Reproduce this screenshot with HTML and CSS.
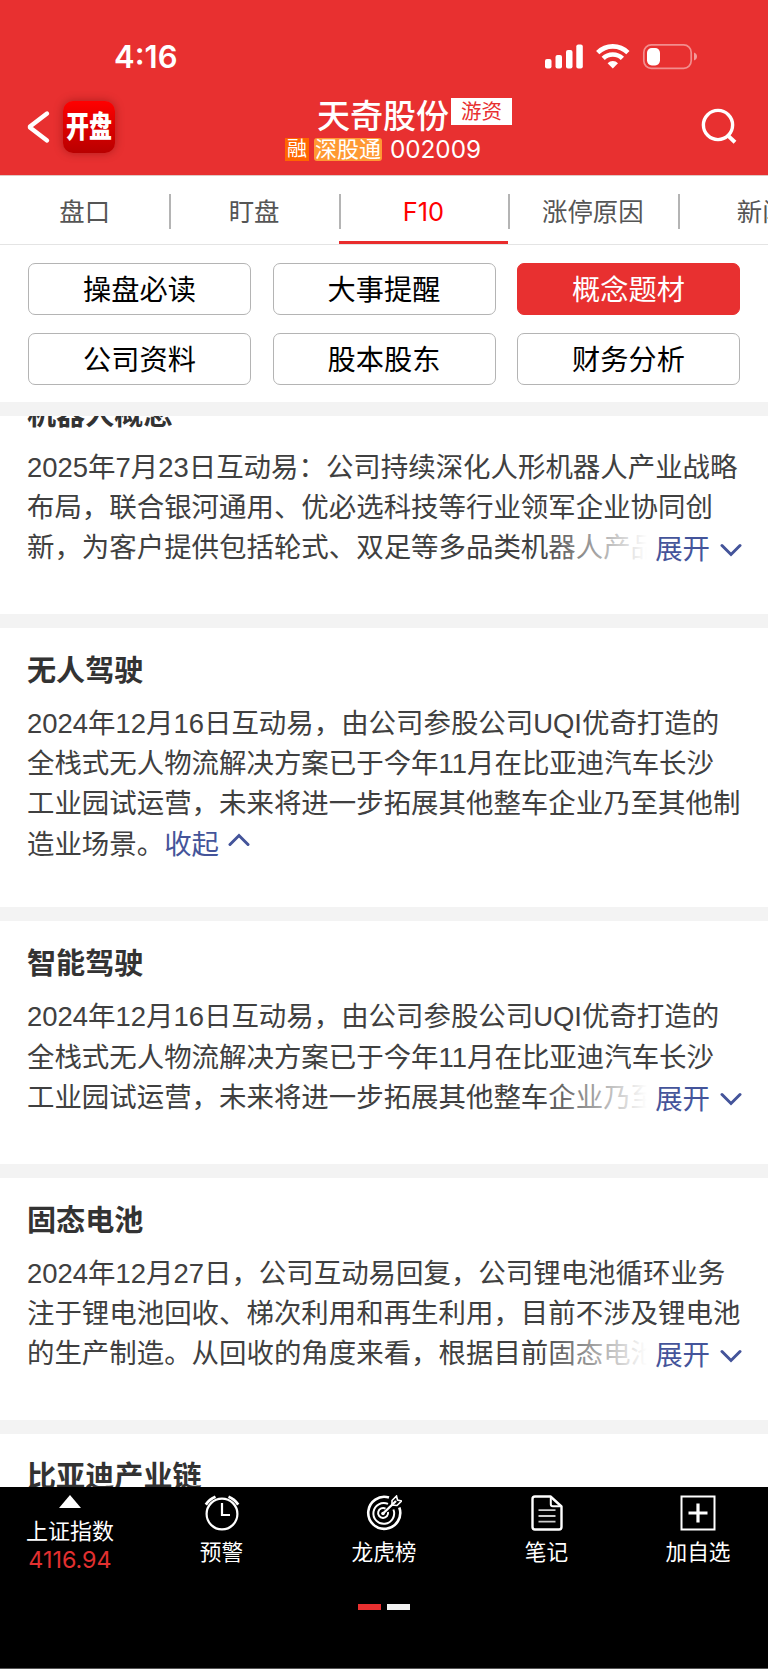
FILE: index.html
```html
<!DOCTYPE html>
<html lang="zh-CN">
<head>
    <meta charset="UTF-8">
    <meta name="viewport" content="width=device-width, initial-scale=1.0">
    <title>天奇股份 002009</title>
    <link rel="stylesheet" href="styles.css">
</head>
<body>
    <header class="header">
        <div class="status-bar">
            <span class="time">4:16</span>
            <svg class="status-icons" width="154" height="26" viewBox="0 0 154 26">
                <g fill="#fff">
                    <rect x="1" y="15" width="6.5" height="9.5" rx="2"/>
                    <rect x="11.5" y="11" width="6.5" height="13.5" rx="2"/>
                    <rect x="22" y="6" width="6.5" height="18.5" rx="2"/>
                    <rect x="32.3" y="0.5" width="6.5" height="24" rx="2"/>
                </g>
                <g fill="none" stroke="#fff" stroke-width="4.6">
                    <path d="M53.7 8.6a21.4 21.4 0 0 1 30.2 0"/>
                    <path d="M59.2 14.4a13.6 13.6 0 0 1 19.2 0"/>
                </g>
                <path d="M68.8 24.4l-5.2-5.2a7.4 7.4 0 0 1 10.4 0z" fill="#fff"/>
                <rect x="99.8" y="0.9" width="47.4" height="23.4" rx="7.5" fill="none" stroke="#fff" stroke-opacity="0.45" stroke-width="1.7"/>
                <rect x="103" y="4" width="13" height="17.4" rx="4.8" fill="#fff"/>
                <path d="M150 8.6c4 1.2 4 6.8 0 8z" fill="#fff" fill-opacity="0.5"/>
            </svg>
        </div>
        <div class="nav-bar">
            <div class="nav-left">
                <svg width="24" height="36" viewBox="0 0 24 36">
                    <path d="M20 4.5L3 17.5v1L20 31.5" fill="none" stroke="#fff" stroke-width="4.4" stroke-linecap="round" stroke-linejoin="round"/>
                </svg>
                <div class="app-logo"><span>开盘</span></div>
            </div>
            <div class="stock">
                <h1 class="stock-name">天奇股份<span class="stock-tag">游资</span></h1>
                <div class="stock-info">
                    <span class="tag-rong">融</span>
                    <span class="tag-sgt">深股通</span>
                    <span class="stock-code">002009</span>
                </div>
            </div>
            <svg class="search" width="38" height="38" viewBox="0 0 38 38">
                <g fill="none" stroke="#fff" stroke-width="3.4">
                    <circle cx="18" cy="17" r="14.6"/>
                    <path d="M28 27.6l7 6.6" stroke-width="4"/>
                </g>
            </svg>
        </div>
    </header>

    <nav class="tabs">
        <div class="tab">盘口</div>
        <div class="tab">盯盘</div>
        <div class="tab active">F10</div>
        <div class="tab">涨停原因</div>
        <div class="tab">新闻</div>
    </nav>

    <div class="menu">
        <div class="menu-btn">操盘必读</div>
        <div class="menu-btn">大事提醒</div>
        <div class="menu-btn active">概念题材</div>
        <div class="menu-btn">公司资料</div>
        <div class="menu-btn">股本股东</div>
        <div class="menu-btn">财务分析</div>
    </div>

    <main class="list">
        <section class="card scrolled">
            <h2>机器人概念</h2>
            <div class="text">
                2025年7月23日互动易：公司持续深化人形机器人产业战略<br>
                布局，联合银河通用、优必选科技等行业领军企业协同创<br>
                新，为客户提供包括轮式、双足等多品类机器人产品
                <div class="expand">展开<svg width="22" height="15" viewBox="0 0 22 15"><path d="M2 2.5l9 9 9-9"/></svg></div>
            </div>
        </section>
        <section class="card opened">
            <h2>无人驾驶</h2>
            <div class="text">
                2024年12月16日互动易，由公司参股公司UQI优奇打造的<br>
                全栈式无人物流解决方案已于今年11月在比亚迪汽车长沙<br>
                工业园试运营，未来将进一步拓展其他整车企业乃至其他制<br>
                造业场景。<span class="collapse">收起<svg width="22" height="15" viewBox="0 0 22 15"><path d="M2 12.5l9-9 9 9"/></svg></span>
            </div>
        </section>
        <section class="card">
            <h2>智能驾驶</h2>
            <div class="text">
                2024年12月16日互动易，由公司参股公司UQI优奇打造的<br>
                全栈式无人物流解决方案已于今年11月在比亚迪汽车长沙<br>
                工业园试运营，未来将进一步拓展其他整车企业乃至
                <div class="expand">展开<svg width="22" height="15" viewBox="0 0 22 15"><path d="M2 2.5l9 9 9-9"/></svg></div>
            </div>
        </section>
        <section class="card">
            <h2>固态电池</h2>
            <div class="text">
                2024年12月27日，公司互动易回复，公司锂电池循环业务<br>
                注于锂电池回收、梯次利用和再生利用，目前不涉及锂电池<br>
                的生产制造。从回收的角度来看，根据目前固态电池
                <div class="expand">展开<svg width="22" height="15" viewBox="0 0 22 15"><path d="M2 2.5l9 9 9-9"/></svg></div>
            </div>
        </section>
        <section class="card">
            <h2>比亚迪产业链</h2>
        </section>
    </main>

    <footer class="footer">
        <div class="toolbar">
            <div class="index">
                <svg width="22" height="13" viewBox="0 0 22 13"><path d="M0 13L11 0l11 13z" fill="#fff"/></svg>
                <span class="index-name">上证指数</span>
                <span class="index-value">4116.94</span>
            </div>
            <div class="tool">
                <svg width="36" height="36" viewBox="0 0 36 36">
                    <g fill="none" stroke="#fff" stroke-width="2.2">
                        <circle cx="18" cy="19" r="15.4"/>
                        <path d="M18 8v12h8"/>
                        <path d="M1.8 9.6Q5.5 4.2 11.5 1.8M34.2 9.6Q30.5 4.2 24.5 1.8" stroke-width="2.8"/>
                    </g>
                </svg>
                <span>预警</span>
            </div>
            <div class="tool">
                <svg width="36" height="36" viewBox="0 0 36 36">
                    <g fill="none" stroke="#fff" stroke-width="2">
                        <path d="M23 2.6A16 16 0 1 0 33.3 12.5" stroke-width="2.6"/>
                        <path d="M22 8.9A10.4 10.4 0 1 0 27.4 14.5"/>
                        <path d="M19.5 13.6A5 5 0 1 0 22 17"/>
                        <path d="M16.5 19L30 6" stroke-width="2.4"/>
                        <path d="M26 10V5.5L30.5 1l1 4 4 1L31 10.5z" stroke-width="1.6"/>
                    </g>
                    <circle cx="17" cy="18.5" r="1.8" fill="#fff"/>
                </svg>
                <span>龙虎榜</span>
            </div>
            <div class="tool">
                <svg width="36" height="36" viewBox="0 0 36 36">
                    <g fill="none" stroke="#fff" stroke-width="2.4" stroke-linejoin="round">
                        <path d="M6 1.5h15.5L32.5 11.500V32a2.5 2.5 0 0 1-2.5 2.5H6A2.5 2.5 0 0 1 3.500 32V4A2.5 2.5 0 0 1 6 1.500z"/>
                        <path d="M21.8 2v7.200a2 2 0 0 0 2 2H32" stroke-width="2"/>
                        <path d="M9.5 15.200h17M9.500 21h17M9.500 26.600h17" stroke="#ccc" stroke-width="1.8"/>
                    </g>
                </svg>
                <span>笔记</span>
            </div>
            <div class="tool">
                <svg width="36" height="36" viewBox="0 0 36 36">
                    <rect x="1.5" y="1.5" width="33" height="33" fill="none" stroke="#fff" stroke-width="2"/>
                    <path d="M18 8.500v19M8.500 18h19" stroke="#fff" stroke-width="3.2"/>
                </svg>
                <span>加自选</span>
            </div>
        </div>
        <div class="pager">
            <i class="on"></i>
            <i></i>
        </div>
    </footer>
</body>
</html>
```
FILE: styles.css
```css
* {
    box-sizing: border-box;
}

body {
    display: flex;
    flex-direction: column;
    width: 768px;
    height: 1669px;
    margin: 0;
    overflow: hidden;
    background-color: #fff;
    font-family: Inter, "Noto Sans CJK SC", sans-serif;
}

h1, h2 {
    margin: 0;
}

svg {
    display: block;
    flex: none;
}

.header {
    flex: none;
    height: 176px;
    color: #fff;
    background-color: #e83030;
    border-bottom: 1px solid #e0c8c4;
}

.status-bar {
    display: flex;
    justify-content: space-between;
    align-items: center;
    height: 90px;
    padding: 24px 70px 0 114px;
}

.time {
    font-size: 31px;
    font-weight: 600;
    line-height: 42px;
}

.nav-bar {
    display: grid;
    grid-template-columns: 200px 1fr 200px;
    align-items: start;
}

.nav-left {
    display: flex;
    align-items: center;
    gap: 12px;
    padding: 11px 0 0 27px;
}

.app-logo {
    display: flex;
    justify-content: center;
    align-items: center;
    width: 52px;
    height: 52px;
    border-radius: 10px;
    background: linear-gradient(#ff0000, #b80000);
    box-shadow: 0 0 10px rgba(90, 0, 0, 0.4);
}

.app-logo span {
    font-size: 23px;
    font-weight: 900;
    line-height: 30px;
    transform: scaleY(1.3);
}

.stock {
    display: flex;
    flex-direction: column;
    align-items: center;
    padding: 6px 2px 0 0;
}

.stock-name {
    position: relative;
    font-size: 33px;
    font-weight: 500;
    line-height: 40px;
}

.stock-tag {
    position: absolute;
    left: 134px;
    top: 2px;
    width: 61px;
    font-size: 20.5px;
    font-weight: 400;
    line-height: 27px;
    text-align: center;
    color: #e83030;
    background-color: #fff;
}

.stock-info {
    display: flex;
    align-items: center;
    height: 24px;
    margin-top: 1px;
    white-space: nowrap;
}

.tag-rong {
    width: 24px;
    margin-right: 5px;
    font-size: 20px;
    line-height: 23px;
    text-align: center;
    background-color: #ff6600;
}

.tag-sgt {
    width: 68px;
    margin-right: 8px;
    border-radius: 3px;
    font-size: 22px;
    line-height: 23px;
    text-align: center;
    background-color: #ff9933;
}

.stock-code {
    font-size: 24.3px;
}

.search {
    justify-self: end;
    margin: 18px 30px 0 0;
}

.tabs {
    display: flex;
    flex: none;
    height: 69px;
    overflow: hidden;
    border-bottom: 1px solid #e4e4e4;
}

.tab {
    position: relative;
    flex: none;
    width: 169.4px;
    height: 69px;
    font-size: 25.4px;
    line-height: 71px;
    text-align: center;
    color: #555;
}

.tab + .tab::before {
    content: "";
    position: absolute;
    left: 0;
    top: 18px;
    width: 2px;
    height: 35px;
    background-color: #b4b4b4;
}

.tab.active {
    color: #ff0000;
    border-bottom: 4px solid #e92c2c;
}

.menu {
    display: grid;
    flex: none;
    grid-template-columns: repeat(3, 1fr);
    align-content: start;
    gap: 18px 21.5px;
    height: 171px;
    padding: 17.5px 28px 0;
    border-bottom: 14px solid #f3f3f3;
}

.menu-btn {
    height: 52px;
    border: 1px solid #b4b4b4;
    border-radius: 7px;
    font-size: 28.2px;
    line-height: 52px;
    text-align: center;
    color: #000;
}

.menu-btn.active {
    border-color: #e83030;
    color: #fff;
    background-color: #e83030;
}

.list {
    flex: 1;
    min-height: 0;
    overflow: hidden;
}

.card {
    height: 256.3px;
    padding: 23px 27px 0;
    border-bottom: 14px solid #f3f3f3;
}

.card.scrolled {
    margin-top: -44.3px;
}

.card.opened {
    height: 293.3px;
}

.card h2 {
    height: 40px;
    margin-bottom: 13px;
    font-size: 29.1px;
    font-weight: 700;
    line-height: 40px;
    color: #333;
}

.text {
    position: relative;
    font-family: "Liberation Sans", "Noto Sans CJK SC", sans-serif;
    font-size: 27.45px;
    line-height: 40.2px;
    white-space: nowrap;
    color: #404040;
}

/* fades the last line out under the link */
.expand {
    position: absolute;
    right: -1px;
    bottom: -2px;
    display: flex;
    justify-content: flex-end;
    align-items: center;
    gap: 10px;
    width: 203px;
    color: #44549a;
    background: linear-gradient(to right, rgba(255, 255, 255, 0), #fff 108px);
}

.collapse {
    color: #44549a;
}

.collapse svg {
    display: inline-block;
    margin-left: 9px;
    vertical-align: 7px;
}

.expand path,
.collapse path {
    fill: none;
    stroke: #44549a;
    stroke-width: 3;
    stroke-linecap: round;
}

.footer {
    flex: none;
    height: 182px;
    color: #fff;
    background-color: #000;
    border-bottom: 1px solid #555;
}

.toolbar {
    display: grid;
    grid-template-columns: 140px 163px 162px 163px 140px;
    height: 117px;
}

.index,
.tool {
    display: flex;
    flex-direction: column;
    align-items: center;
    padding-top: 8px;
}

.index-name {
    margin-top: 8px;
    font-size: 22px;
    line-height: 30px;
}

.index-value {
    font-size: 23.3px;
    line-height: 28px;
    color: #e23030;
}

.tool span {
    margin-top: 6px;
    font-size: 21.7px;
    line-height: 30px;
}

.pager {
    display: flex;
    justify-content: center;
    gap: 6px;
}

.pager i {
    width: 23px;
    height: 6px;
    background-color: #f2f2f2;
}

.pager .on {
    background-color: #e83030;
}
```
